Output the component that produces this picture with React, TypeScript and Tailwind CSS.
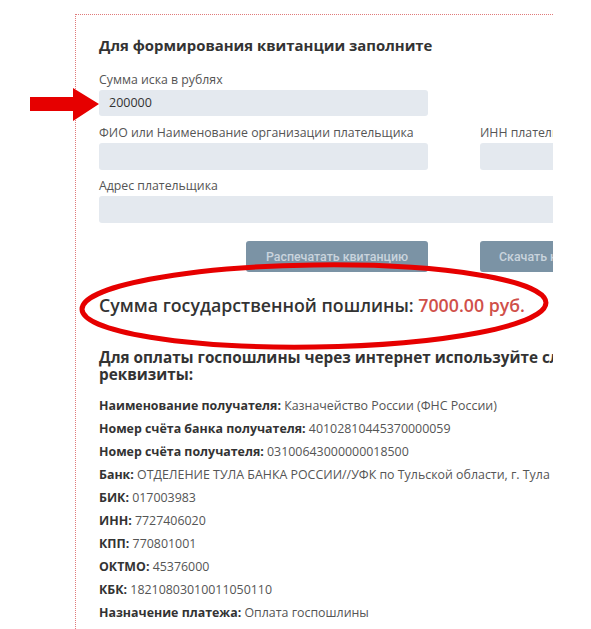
export default function App() {
  const details: [string, string][] = [
    ["Наименование получателя:", "Казначейство России (ФНС России)"],
    ["Номер счёта банка получателя:", "40102810445370000059"],
    ["Номер счёта получателя:", "03100643000000018500"],
    ["Банк:", "ОТДЕЛЕНИЕ ТУЛА БАНКА РОССИИ//УФК по Тульской области, г. Тула"],
    ["БИК:", "017003983"],
    ["ИНН:", "7727406020"],
    ["КПП:", "770801001"],
    ["ОКТМО:", "45376000"],
    ["КБК:", "18210803010011050110"],
    ["Назначение платежа:", "Оплата госпошлины"],
  ];
  return (
    <div className="relative h-[629px] w-[591px] overflow-hidden bg-white font-['Open_Sans',sans-serif]">
      <div className="ml-[75px] mt-[14px] h-[615px] w-[478px] overflow-hidden border-l border-t border-dotted border-[#e07a7a]">
        <div className="w-[760px] pl-[23px] pt-[20px]">
          <div className="text-[14.9px] font-bold leading-[20px] text-[#333]">
            Для формирования квитанции заполните
          </div>
          <div className="mt-[16px] text-[12.3px] leading-[18px] text-[#555]">Сумма иска в рублях</div>
          <div className="mt-[1px] h-[26px] w-[329px] rounded-[3px] bg-[#e4e9ef] px-[10px] text-[12.5px] leading-[26px] text-[#333]">
            200000
          </div>
          <div className="mt-[8px] flex gap-[52px]">
            <div className="w-[329px] shrink-0">
              <div className="whitespace-nowrap text-[12.3px] leading-[18px] text-[#555]">
                ФИО или Наименование организации плательщика
              </div>
              <div className="mt-[1px] h-[27px] w-[329px] rounded-[3px] bg-[#e4e9ef]" />
            </div>
            <div className="w-[329px] shrink-0">
              <div className="whitespace-nowrap text-[12.3px] leading-[18px] text-[#555]">ИНН плательщика</div>
              <div className="mt-[1px] h-[27px] w-[329px] rounded-[3px] bg-[#e4e9ef]" />
            </div>
          </div>
          <div className="mt-[7px] text-[12.3px] leading-[18px] text-[#555]">Адрес плательщика</div>
          <div className="mt-[1px] h-[27px] w-[710px] rounded-[3px] bg-[#e4e9ef]" />
          <div className="mt-[18px] flex gap-[52px]">
            <div className="flex w-[329px] shrink-0 justify-end">
              <div className="h-[31px] w-[182px] rounded-[3px] bg-[#7b93a5] text-center font-['Roboto',sans-serif] text-[12.4px] font-medium leading-[31px] text-[#c9d4dd]">
                Распечатать квитанцию
              </div>
            </div>
            <div className="flex w-[329px] shrink-0 justify-start">
              <div className="h-[31px] w-[182px] whitespace-nowrap rounded-[3px] bg-[#7b93a5] pl-[19px] font-['Roboto',sans-serif] text-[12.4px] font-medium leading-[31px] text-[#c9d4dd]">
                Скачать квитанцию
              </div>
            </div>
          </div>
          <div className="mt-[20px] whitespace-nowrap text-[17.75px] font-semibold leading-[26px] text-[#333]">
            Сумма государственной пошлины: <span className="text-[#d0504a]">7000.00 руб.</span>
          </div>
          <div className="mt-[31px] w-[580px] text-[15.3px] font-bold leading-[17px] text-[#333]">
            Для оплаты госпошлины через интернет используйте следующие реквизиты:
          </div>
          <div className="mt-[11px] flex flex-col">
            {details.map(([k, v]) => (
              <div key={k} className="whitespace-nowrap text-[12.4px] leading-[23px] text-[#555]">
                <span className="font-bold text-[#333]">{k}</span> {v}
              </div>
            ))}
          </div>
        </div>
      </div>

      <svg className="absolute left-0 top-0" width="591" height="629" viewBox="0 0 591 629">
        <polygon points="30,97 73,97 73,88 99,104 73,121 73,111 30,111" fill="#e60000" />
        <ellipse cx="314" cy="306" rx="232" ry="41" fill="none" stroke="#e60000" strokeWidth="5" transform="rotate(-0.8 314 306)" />
      </svg>
    </div>
  );
}
